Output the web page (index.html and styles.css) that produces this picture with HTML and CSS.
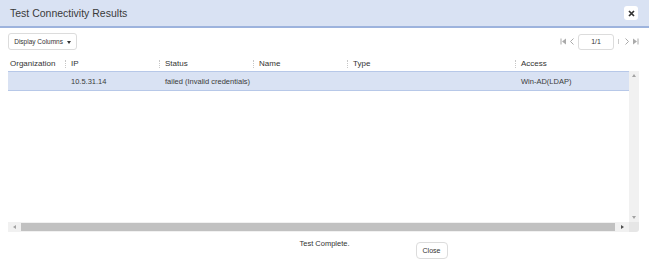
FILE: index.html
```html
<!DOCTYPE html>
<html lang="en">
<head>
  <meta charset="UTF-8">
  <meta name="viewport" content="width=device-width, initial-scale=1.0">
  <title>Test Connectivity Results</title>
  <link rel="stylesheet" href="styles.css">
</head>
<body>

  <div class="modal">
    <div class="modal-header">
      <span class="modal-title">Test Connectivity Results</span>
      <button type="button" class="btn-x" aria-label="Close">
        <svg width="7" height="7" viewBox="0 0 7 7"><path d="M1 1L6 6M6 1L1 6" stroke="#333" stroke-width="1.7"/></svg>
      </button>
    </div>

    <div class="modal-body">
      <div class="toolbar">
        <button type="button" class="btn-cols">Display Columns <span class="caret"></span></button>
        <div class="pager">
          <svg width="7" height="7" viewBox="0 0 7 7"><path d="M1 0.5V6.5" stroke="#aaa" stroke-width="1"/><path d="M6 0.5L2 3.5L6 6.5Z" fill="#aaa"/></svg>
          <svg width="6" height="7" viewBox="0 0 6 7"><path d="M4.5 0.5L1.5 3.5L4.5 6.5" stroke="#aaa" stroke-width="1" fill="none"/></svg>
          <input type="text" class="page-input" value="1/1" readonly>
          <span class="tick"></span>
          <svg width="6" height="7" viewBox="0 0 6 7"><path d="M1.5 0.5L4.5 3.5L1.5 6.5" stroke="#aaa" stroke-width="1" fill="none"/></svg>
          <svg width="7" height="7" viewBox="0 0 7 7"><path d="M6 0.5V6.5" stroke="#aaa" stroke-width="1"/><path d="M1 0.5L5 3.5L1 6.5Z" fill="#aaa"/></svg>
        </div>
      </div>

      <div class="grid">
        <div class="grid-head cols">
          <div class="th">Organization</div>
          <div class="th sep">IP</div>
          <div class="th sep">Status</div>
          <div class="th sep">Name</div>
          <div class="th sep">Type</div>
          <div class="th sep">Access</div>
        </div>
        <div class="head-blank"></div>

        <div class="grid-rows">
          <div class="row cols selected">
            <div class="td"></div>
            <div class="td">10.5.31.14</div>
            <div class="td">failed (Invalid credentials)</div>
            <div class="td"></div>
            <div class="td"></div>
            <div class="td">Win-AD(LDAP)</div>
          </div>
        </div>

        <div class="vscroll">
          <span class="arrow up"></span>
          <span class="arrow down"></span>
        </div>

        <div class="hscroll">
          <span class="arrow left"></span>
          <span class="thumb"></span>
          <span class="arrow right"></span>
        </div>
        <div class="corner"></div>
      </div>
    </div>

    <div class="modal-footer">
      <span></span>
      <span class="status-text">Test Complete.</span>
      <div><button type="button" class="btn-close">Close</button></div>
    </div>
  </div>

</body>
</html>
```

FILE: styles.css
```css
body {
  font-family: "Liberation Sans", Arial, sans-serif;
  color: #333;
  margin: 0;
  padding: 0;
  background-color: #fff;
}

.modal {
  width: 649px;
  height: 267px;
  display: flex;
  flex-direction: column;
  box-sizing: border-box;
}

.modal-header {
  height: 26px;
  background-color: #d9e2f3;
  border-bottom: 2px solid #9db3dd;
  display: flex;
  align-items: center;
  justify-content: space-between;
  padding: 0 11px 0 10px;
}

.modal-title {
  font-size: 10.5px;
  color: #3a3a3a;
}

.btn-x {
  width: 14px;
  height: 14px;
  padding: 0;
  border: none;
  border-radius: 3px;
  background-color: #fff;
  display: flex;
  align-items: center;
  justify-content: center;
}

.modal-body {
  padding: 5px 10px 0 8px;
}

.toolbar {
  height: 17px;
  display: flex;
  align-items: center;
  justify-content: space-between;
}

.btn-cols {
  height: 17px;
  width: 69px;
  padding: 0;
  font-family: inherit;
  font-size: 6.5px;
  color: #333;
  background-color: #fff;
  border: 1px solid #dcdcdc;
  border-radius: 3px;
}

.caret {
  display: inline-block;
  width: 0;
  height: 0;
  margin-left: 2px;
  vertical-align: middle;
  border-left: 2.5px solid transparent;
  border-right: 2.5px solid transparent;
  border-top: 3px solid #333;
}

.pager {
  display: flex;
  align-items: center;
  gap: 2px;
}

.page-input {
  width: 36px;
  height: 16px;
  box-sizing: border-box;
  margin: 0 2px 0 1px;
  padding: 0;
  text-align: center;
  font-family: inherit;
  font-size: 7px;
  color: #333;
  border: 1px solid #dcdcdc;
  border-radius: 3px;
}

.tick {
  width: 1px;
  height: 5px;
  background-color: #ccc;
  margin-right: 3px;
}

.grid {
  margin-top: 5px;
  height: 177px;
  display: grid;
  grid-template-columns: 1fr 10px;
  grid-template-rows: 16px 1fr 10px;
  font-size: 7.5px;
}

.cols {
  display: grid;
  grid-template-columns: 57px 94px 94px 94px 168px 1fr;
}

.grid-head {
  align-items: center;
}

.th {
  padding-left: 2px;
  font-size: 8px;
  color: #333;
}

.th.sep {
  position: relative;
  padding-left: 6px;
}

.th.sep::before {
  content: '';
  position: absolute;
  left: 0;
  top: 1px;
  height: 8px;
  border-left: 1px dotted #c8c8c8;
}

.grid-rows {
  overflow: hidden;
}

.row {
  height: 18px;
  align-items: center;
}

.row.selected {
  background-color: #d9e2f3;
  border-top: 1px solid #b7c8e8;
  border-bottom: 1px solid #b7c8e8;
}

.td {
  padding-left: 6px;
  white-space: nowrap;
  color: #3a3a3a;
}

.vscroll {
  background-color: #f1f1f1;
  display: flex;
  flex-direction: column;
  justify-content: space-between;
  align-items: center;
  padding: 3px 0;
}

.hscroll {
  background-color: #f1f1f1;
  display: flex;
  align-items: center;
  gap: 3px;
  padding: 0 2px 0 3px;
}

.thumb {
  flex: 1;
  height: 8px;
  background-color: #c1c1c1;
}

.corner {
  background-color: #e6e6e6;
  border-bottom-right-radius: 3px;
}

.arrow {
  width: 0;
  height: 0;
  display: block;
}

.arrow.up {
  border-left: 2.5px solid transparent;
  border-right: 2.5px solid transparent;
  border-bottom: 3px solid #a3a3a3;
}

.arrow.down {
  border-left: 2.5px solid transparent;
  border-right: 2.5px solid transparent;
  border-top: 3px solid #a3a3a3;
}

.arrow.left {
  border-top: 2.5px solid transparent;
  border-bottom: 2.5px solid transparent;
  border-right: 3px solid #a3a3a3;
  margin: 0 2px;
}

.arrow.right {
  border-top: 2.5px solid transparent;
  border-bottom: 2.5px solid transparent;
  border-left: 3px solid #505050;
  margin: 0 3px;
}

.modal-footer {
  flex: 1;
  display: grid;
  grid-template-columns: 1fr auto 1fr;
  padding-top: 7px;
  align-items: start;
}

.status-text {
  font-size: 7.5px;
  line-height: 9px;
  color: #333;
}

.btn-close {
  margin-left: 66px;
  margin-top: -1px;
  width: 32px;
  height: 17px;
  padding: 0;
  font-family: inherit;
  font-size: 7px;
  color: #333;
  background-color: #fff;
  border: 1px solid #dcdcdc;
  border-radius: 4px;
}
```
